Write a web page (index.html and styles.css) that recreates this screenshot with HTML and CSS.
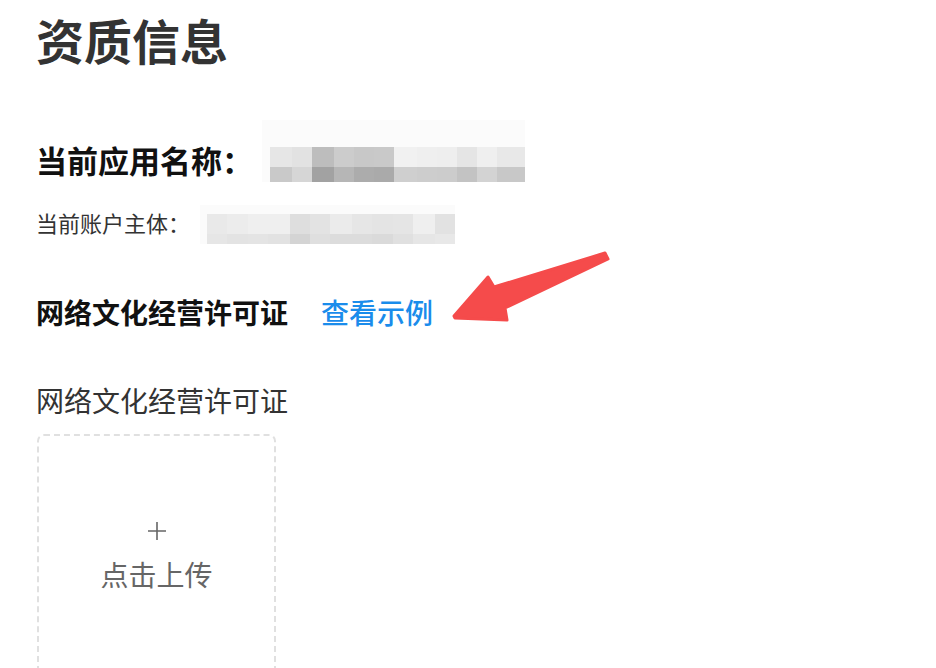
FILE: index.html
```html
<!DOCTYPE html>
<html lang="zh-CN">
<head>
  <meta charset="UTF-8">
  <meta name="viewport" content="width=device-width, initial-scale=1.0">
  <title>资质信息</title>
  <link rel="stylesheet" href="styles.css">
</head>
<body>

  <div class="page">
    <h1>资质信息</h1>

    <div class="app-row">
      <span class="app-label">当前应用名称：</span>
      <div class="mosaic mosaic-app">
        <div class="mosaic-row row-a"></div>
        <div class="mosaic-row row-b"></div>
      </div>
    </div>

    <div class="account-row">
      <span class="account-label">当前账户主体：</span>
      <div class="mosaic mosaic-account">
        <div class="mosaic-row row-c"></div>
        <div class="mosaic-row row-d"></div>
      </div>
    </div>

    <div class="license-head">
      <span class="license-title">网络文化经营许可证</span>
      <a class="example-link" href="#">查看示例</a>
    </div>

    <div class="field-label">网络文化经营许可证</div>

    <div class="upload-box">
      <svg class="plus" width="22" height="22" viewBox="0 0 22 22">
        <path d="M11 2 V20 M2 11 H20" stroke="#666" stroke-width="1.6" fill="none"/>
      </svg>
      <span class="upload-text">点击上传</span>
    </div>
  </div>

  <!-- flèche rouge par-dessus -->
  <svg class="arrow" width="936" height="668" viewBox="0 0 936 668">
    <polygon points="454,316 488,277 494,287 605,253 608,259 505,308 507,320 455,318"
             fill="#f54b4b" stroke="#f54b4b" stroke-width="3" stroke-linejoin="round"/>
  </svg>

</body>
</html>
```

FILE: styles.css
```css
  body {
    margin: 0;
    font-family: "Noto Sans CJK SC", "Noto Sans", sans-serif;
    background-color: #ffffff;
    color: #333333;
    overflow: hidden;
  }
  .page {
    padding: 10px 0 0 36px;
  }
  h1 {
    margin: 0;
    font-size: 48px;
    line-height: 58px;
    font-weight: 700;
    color: #333333;
  }

  .app-row {
    display: flex;
    align-items: flex-end;
    margin-top: 52px;
  }
  .app-label {
    font-size: 31px;
    line-height: 40px;
    font-weight: 700;
    color: #111111;
    margin-bottom: 2px;
  }
  .account-row {
    display: flex;
    align-items: flex-end;
    margin-top: 22px;
  }
  .account-label {
    font-size: 22px;
    line-height: 36px;
    color: #333333;
    margin-bottom: 5px;
  }

  /* zones floutées */
  .mosaic {
    display: flex;
    flex-direction: column;
    justify-content: flex-end;
    background-color: #fbfbfb;
    filter: blur(0.6px);
  }
  .mosaic-app {
    width: 263px;
    height: 62px;
    margin-left: 9px;
    padding-left: 8px;
    box-sizing: border-box;
  }
  .mosaic-account {
    width: 255px;
    height: 39px;
    margin-left: 10px;
    padding-left: 7px;
    box-sizing: border-box;
    margin-bottom: 1px;
  }
  .mosaic-row {
    width: 100%;
  }
  .row-a {
    height: 20px;
    background: linear-gradient(to right,
      #e6e6e6 0 22px, #e2e2e2 22px 42px, #bdbdbd 42px 64px, #cccccc 64px 84px,
      #c8c8c8 84px 104px, #c9c9c9 104px 124px, #f1f1f1 124px 147px, #efefef 147px 167px,
      #eeeeee 167px 187px, #e5e5e5 187px 207px, #efefef 207px 227px, #e8e8e8 227px);
  }
  .row-b {
    height: 15px;
    background: linear-gradient(to right,
      #c9c9c9 0 22px, #d6d6d6 22px 42px, #a2a2a2 42px 64px, #b6b6b6 64px 84px,
      #acacac 84px 104px, #aaaaaa 104px 124px, #cfcfcf 124px 147px, #cdcdcd 147px 167px,
      #cccccc 167px 187px, #c3c3c3 187px 207px, #d3d3d3 207px 227px, #c8c8c8 227px);
  }
  .row-c {
    height: 20px;
    background: linear-gradient(to right,
      #e9e9e9 0 20px, #ececec 20px 41px, #efefef 41px 61px, #efefef 61px 83px,
      #dedede 83px 103px, #e3e3e3 103px 123px, #ebebeb 123px 145px, #e6e6e6 145px 165px,
      #e4e4e4 165px 186px, #e5e5e5 186px 206px, #efefef 206px 228px, #e2e2e2 228px);
  }
  .row-d {
    height: 10px;
    background: linear-gradient(to right,
      #e6e6e6 0 20px, #e3e3e3 20px 41px, #e4e4e4 41px 61px, #e2e2e2 61px 83px,
      #d4d4d4 83px 103px, #dfdfdf 103px 123px, #dcdcdc 123px 145px, #dcdcdc 145px 165px,
      #dadada 165px 186px, #e0e0e0 186px 206px, #e6e6e6 206px 228px, #e8e8e8 228px);
  }

  .license-head {
    display: flex;
    align-items: center;
    gap: 33px;
    margin-top: 47px;
    line-height: 40px;
  }
  .license-title {
    font-size: 28px;
    font-weight: 700;
    color: #111111;
  }
  .example-link {
    font-size: 28px;
    font-weight: 500;
    color: #1a8ceb;
    text-decoration: none;
  }

  .field-label {
    margin-top: 48px;
    font-size: 28px;
    line-height: 40px;
    color: #333333;
  }

  .upload-box {
    width: 239px;
    height: 260px;
    margin-top: 14px;
    margin-left: 1px;
    box-sizing: border-box;
    border: 2px dashed #e0e0e0;
    border-radius: 7px;
    display: flex;
    flex-direction: column;
    align-items: center;
    padding-top: 84px;
  }
  .plus {
    display: block;
  }
  .upload-text {
    margin-top: 12px;
    font-size: 28px;
    line-height: 40px;
    color: #666666;
  }

  .arrow {
    position: absolute;
    top: 0;
    left: 0;
    pointer-events: none;
  }
```
